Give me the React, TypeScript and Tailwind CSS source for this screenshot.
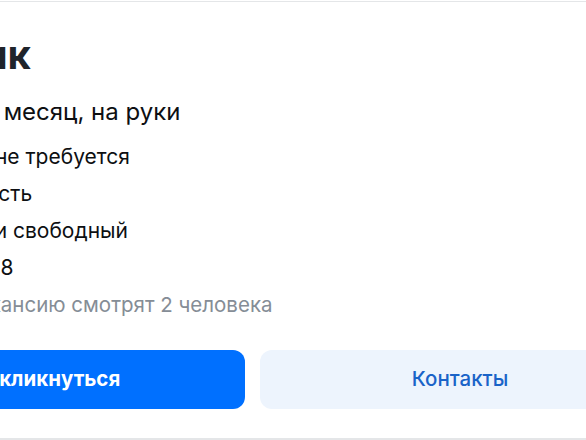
const details = [
  { text: "Опыт работы не требуется", cls: "ml-[6px]" },
  { text: "Полная занятость", cls: "ml-0" },
  { text: "График: 2/2 или свободный", cls: "-ml-[3px]" },
  { text: "Рабочие часы: 8", cls: "-ml-[4px]" },
]

export default function App() {
  return (
    <div className="w-[586px] h-[440px] overflow-hidden bg-white font-['Inter','Noto_Sans',sans-serif]">
      <div className="mt-px h-[439px] border-t border-b-2 border-[#e4e6e8] overflow-hidden">
        <div className="-ml-[152px] w-[812px] pt-[29px] flex flex-col">
          <h1 className="ml-[21px] text-[40px] leading-[48px] font-bold text-[#1f242b] whitespace-nowrap">Грузчик</h1>

          <p className="-ml-[21px] mt-[17px] text-[24px] leading-[32px] text-[#0d0f12] whitespace-nowrap">
            от 50 000 ₽ за месяц, на руки
          </p>

          <div className="mt-[10px] flex flex-col text-[21px] leading-[37px] text-[#0d0f12]">
            {details.map((d) => (
              <span key={d.text} className={"whitespace-nowrap " + d.cls}>{d.text}</span>
            ))}
            <span className="whitespace-nowrap text-[20.5px] leading-[38px] text-[#858d96]">
              Сейчас эту вакансию смотрят 2 человека
            </span>
          </div>

          <div className="mt-[26px] flex gap-[15px]">
            <button className="w-[397px] h-[59px] rounded-[12px] bg-[#0070ff] text-white text-[20.5px] font-bold">
              Откликнуться
            </button>
            <button className="w-[400px] h-[59px] rounded-[12px] bg-[#edf4fd] text-[#1a63c8] text-[20.5px] font-medium">
              Контакты
            </button>
          </div>
        </div>
      </div>
    </div>
  )
}
